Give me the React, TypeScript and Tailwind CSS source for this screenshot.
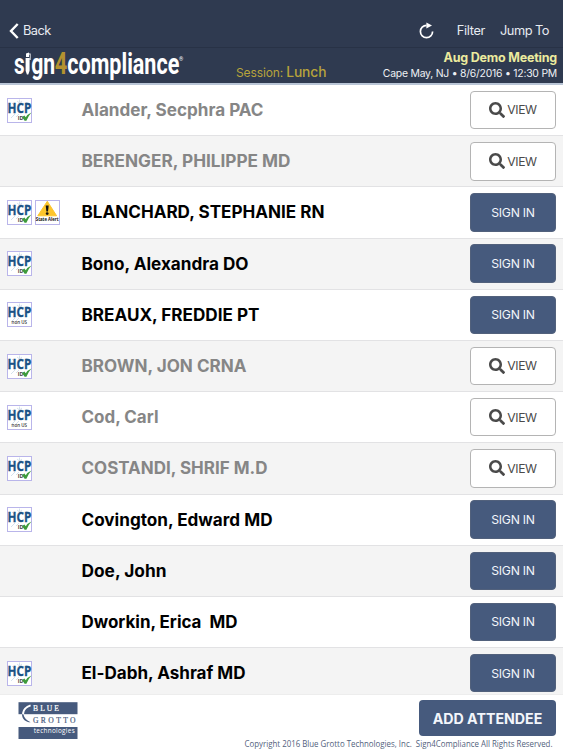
import { FaSearch } from "react-icons/fa";

type Badge = "id" | "nonus" | "alert";

type Attendee = {
  name: string;
  width: number;
  badges: Badge[];
  signedIn?: boolean;
};

const attendees: Attendee[] = [
  { name: "Alander, Secphra PAC", width: 182, badges: ["id"], signedIn: true },
  { name: "BERENGER, PHILIPPE MD", width: 209, badges: [], signedIn: true },
  { name: "BLANCHARD, STEPHANIE RN", width: 243, badges: ["id", "alert"] },
  { name: "Bono, Alexandra DO", width: 167, badges: ["id"] },
  { name: "BREAUX, FREDDIE PT", width: 178, badges: ["nonus"] },
  { name: "BROWN, JON CRNA", width: 165, badges: ["id"], signedIn: true },
  { name: "Cod, Carl", width: 77, badges: ["nonus"], signedIn: true },
  { name: "COSTANDI, SHRIF M.D", width: 186, badges: ["id"], signedIn: true },
  { name: "Covington, Edward MD", width: 191, badges: ["id"] },
  { name: "Doe, John", width: 85, badges: [] },
  { name: "Dworkin, Erica  MD", width: 156, badges: [] },
  { name: "El-Dabh, Ashraf MD", width: 164, badges: ["id"] },
];

const BadgeIcon = ({ type }: { type: Badge }) => {
  if (type === "alert") {
    return (
      <svg width="25" height="25" viewBox="0 0 25 25" className="block overflow-visible">
        <rect x="0.5" y="0.5" width="24" height="24" fill="#fff" stroke="#b9b5ea" />
        <path d="M12.3 1.3 L21.6 15.8 H2.8 Z" fill="#fcc52c" stroke="#fcc52c" strokeLinejoin="round" />
        <path d="M10.7 5.5 H13.7 L13 11.4 H11.4 Z" fill="#111" />
        <circle cx="12.2" cy="13.6" r="1.4" fill="#111" />
        <text x="0.8" y="21.2" fontSize="5" fontWeight="700" textLength="22.8" lengthAdjust="spacingAndGlyphs" fill="#111" fontFamily="Open Sans, sans-serif">
          State Alert
        </text>
      </svg>
    );
  }
  return (
    <svg width="25" height="25" viewBox="0 0 25 25" className="block overflow-visible">
      <rect x="0.5" y="0.5" width="24" height="24" fill="#fff" stroke="#b9b5ea" />
      <path d="M5 5 L8 8 M12.5 1.5 V5 M10 3 L12.5 5 L15 3 M20 4 L18 7 M4 20 L8 16 M9 19 L12 16" stroke="#c9dbe8" strokeWidth="0.8" fill="none" />
      <text x="0.5" y="15.3" fontSize="13.6" fontWeight="700" textLength="23.8" lengthAdjust="spacingAndGlyphs" fill="#1b5286" stroke="#1b5286" strokeWidth="0.3" fontFamily="Open Sans, sans-serif">
        HCP
      </text>
      {type === "id" ? (
        <>
          <text x="10.8" y="22.3" fontSize="5.3" fontWeight="700" fill="#444" fontFamily="Open Sans, sans-serif">
            ID
          </text>
          <path d="M15 19 L17.4 17.6 L18.8 19.2 Q20.7 16 24.4 14.4 Q21.2 18 19.4 22.8 L17.6 22.8 Z" fill="#3d9b3c" />
        </>
      ) : (
        <text x="4.6" y="21.5" fontSize="5.2" fontWeight="600" textLength="15.5" lengthAdjust="spacingAndGlyphs" fill="#333" fontFamily="Open Sans, sans-serif">
          non US
        </text>
      )}
    </svg>
  );
};

const AttendeeRow = ({ attendee }: { attendee: Attendee }) => {
  return (
    <div className="flex items-center h-[51.2px] shrink-0 pl-[7px] pr-[7px] border-b border-[#e2e2e4] odd:bg-white even:bg-[#f4f4f4]">
      <div className="flex gap-[3px] w-[74px] shrink-0">
        {attendee.badges.map((b) => (
          <BadgeIcon key={b} type={b} />
        ))}
      </div>
      <svg height="26" width="260" className={attendee.signedIn ? "fill-[#868686]" : "fill-black"}>
        <text x="0.5" y="19.2" textLength={attendee.width} lengthAdjust="spacingAndGlyphs" className="text-[17px] font-bold whitespace-pre">
          {attendee.name}
        </text>
      </svg>
      {attendee.signedIn ? (
        <button className="ml-auto flex items-center justify-center gap-[2px] w-[86px] h-[38.5px] rounded-[4px] border border-[#b4b4b4] bg-white text-[#4a4a4a] text-[12.2px] tracking-[-0.4px]">
          <FaSearch className="size-[16px]" />
          <span className="pt-px">VIEW</span>
        </button>
      ) : (
        <button className="ml-auto w-[86px] h-[38.5px] pt-px rounded-[4px] border border-[#52617c] bg-[#465a7d] text-[#f3f6fb] text-[12.2px] tracking-[-0.25px]">
          SIGN IN
        </button>
      )}
    </div>
  );
};

const Logo = () => {
  return (
    <svg width="172" height="36" viewBox="0 0 172 36" className="block overflow-visible" fontFamily="Roboto, sans-serif" fontWeight="700" fontSize="30" fill="#fff">
      <text x="0" y="26.4" textLength="10.6" lengthAdjust="spacingAndGlyphs">s</text>
      <path d="M11.6 10 H15.6 V22.8 L14.3 26.6 H12.9 L11.6 22.8 Z M12 5.4 L15 4.4 V9 H12 Z M15 5.6 H16.6 V12 H15.8 V6.6 H15 Z" />
      <text x="17.2" y="26.4" textLength="24" lengthAdjust="spacingAndGlyphs">gn</text>
      <text x="40.8" y="26.4" fontSize="31" textLength="12.5" lengthAdjust="spacingAndGlyphs" fill="#b4922f">4</text>
      <text x="53.3" y="26.4" textLength="112" lengthAdjust="spacingAndGlyphs">compliance</text>
      <text x="165" y="13" fontSize="5.4" fontWeight="400">®</text>
    </svg>
  );
};

const GrottoLogo = () => {
  return (
    <svg width="60" height="38" viewBox="0 0 60 38" className="block overflow-visible">
      <rect x="0.5" y="0.2" width="59" height="12" fill="#465a7d" />
      <rect x="0.5" y="25" width="59" height="12" fill="#465a7d" />
      <path d="M12.6 3.4 C3.4 6.5 2.4 15.5 11 19.8" fill="none" stroke="#fff" strokeWidth="2" />
      <path d="M5.4 12.2 C6 16 8.7 18.4 12.6 20.3 C8 20 4 17.5 4 12.2 Z" fill="#465a7d" />
      <text x="15" y="9" fontSize="7.6" textLength="26" fill="#fff" stroke="#fff" strokeWidth="0.2" fontFamily="Liberation Serif, serif">BLUE</text>
      <text x="15" y="20.5" fontSize="7.6" textLength="42.5" fill="#465a7d" stroke="#465a7d" strokeWidth="0.2" fontFamily="Liberation Serif, serif">GROTTO</text>
      <text x="15.7" y="30.8" fontSize="6.4" textLength="41" fill="#fff" fontFamily="Open Sans, sans-serif">technologies</text>
    </svg>
  );
};

export default function App() {
  return (
    <div className="flex flex-col w-[563px] h-[750px] overflow-hidden bg-white font-['Inter',sans-serif]">
      <header className="h-[85px] shrink-0 bg-[#2f3a50] border-b-2 border-[#b9c5d6]">
        <div className="flex items-end h-[48px] pb-[6px] border-b border-[#283246] text-[12.8px] leading-[20px] text-[#e8ebf1]">
          <svg width="12" height="20" viewBox="0 0 12 20" className="ml-[8px]">
            <path d="M9.7 3 L3 10 L9.7 17" fill="none" stroke="#fff" strokeWidth="2.4" />
          </svg>
          <span className="ml-[3px] tracking-[-0.55px]">Back</span>
          <svg width="18" height="20" viewBox="0 0 18 20" className="ml-auto mr-[21px]">
            <path d="M8.5 4.4 A6.1 6.1 0 1 0 14.6 10.5" fill="none" stroke="#fff" strokeWidth="1.7" />
            <path d="M8.4 1.4 L14 4.4 L8.4 7.4 Z" fill="#fff" />
          </svg>
          <span className="tracking-[-0.35px]">Filter</span>
          <span className="ml-[15px] mr-[14px] tracking-[-0.5px]">Jump To</span>
        </div>
        <div className="flex h-[35px] pl-[14px] pr-[6px]">
          <Logo />
          <div className="ml-[50px] mt-[14px] flex items-baseline gap-[3px] h-[20px] leading-[20px] whitespace-nowrap text-[#b7a33b]">
            <span className="text-[12px] tracking-[-0.1px]">Session:</span>
            <span className="text-[13.8px] font-medium tracking-[-0.1px]">Lunch</span>
          </div>
          <div className="ml-auto text-right whitespace-nowrap">
            <div className="mt-[2px] text-[12.5px] leading-[16px] font-bold tracking-[-0.2px] text-[#eceb9e]">Aug Demo Meeting</div>
            <div className="text-[10.4px] leading-[15px] tracking-[-0.22px] text-[#eef0f4]">Cape May, NJ • 8/6/2016 • 12:30 PM</div>
          </div>
        </div>
      </header>
      <main className="flex flex-col h-[609px] shrink-0 overflow-hidden">
        {attendees.map((a) => (
          <AttendeeRow key={a.name} attendee={a} />
        ))}
      </main>
      <footer className="flex justify-between h-[56px] pl-[18px] pr-[7px] border-t border-[#ededed] bg-white">
        <div className="pt-[7px]">
          <GrottoLogo />
        </div>
        <div className="flex flex-col items-end pt-[5px]">
          <button className="w-[137px] h-[36px] pt-px rounded-[4px] bg-[#465a7d] text-[14.2px] font-bold text-[#f3f6fb]">ADD ATTENDEE</button>
          <svg width="312" height="13" className="block overflow-visible">
            <text x="0.5" y="10.6" fontSize="8.4" textLength="308" lengthAdjust="spacingAndGlyphs" fill="#52617c" fontFamily="Open Sans, sans-serif" className="whitespace-pre">
              {"Copyright 2016 Blue Grotto Technologies, Inc.  Sign4Compliance All Rights Reserved."}
            </text>
          </svg>
        </div>
      </footer>
    </div>
  );
}
